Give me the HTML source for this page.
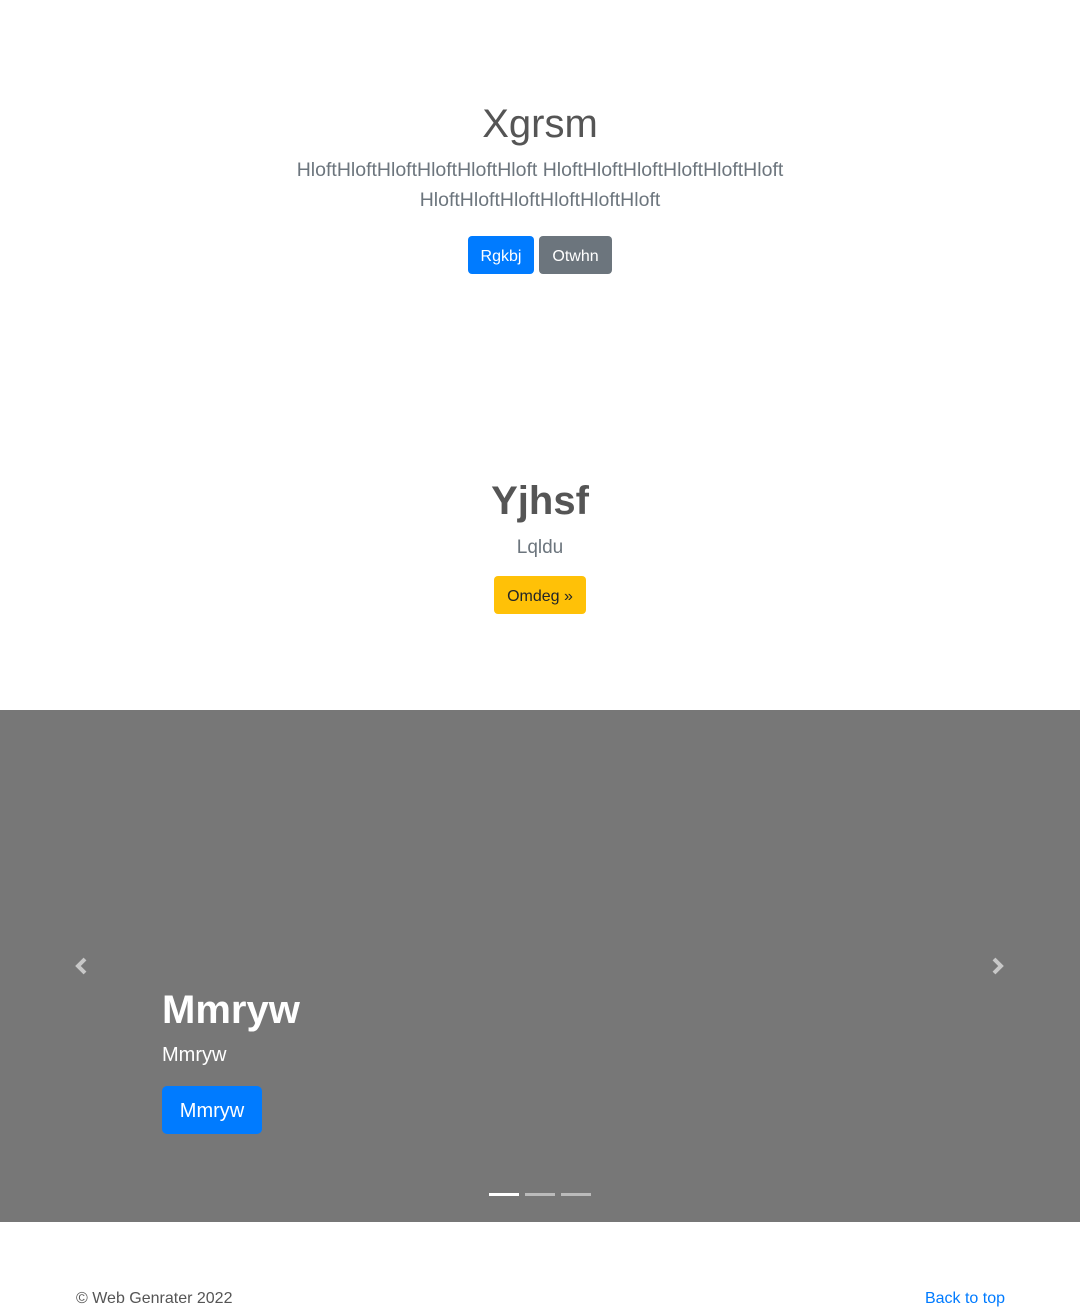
<!DOCTYPE html>
<html><head><meta charset="utf-8">
<style>
*{margin:0;padding:0;box-sizing:border-box}
body{width:1080px;height:1310px;background:#fff;font-family:"Liberation Sans",sans-serif;position:relative;overflow:hidden;color:#212529}
.c{position:absolute;left:0;width:1080px;text-align:center}
.btn{display:inline-block;border-radius:4px;font-size:16px;line-height:42px;height:38px;padding:0 13px;color:#fff;overflow:hidden}
</style></head><body>
<div class="c" style="top:98px;font-size:40px;font-weight:300;color:#555;line-height:52px">Xgrsm</div>
<div class="c" style="top:155px;font-size:19.5px;font-weight:300;color:#6c757d;line-height:30px">HloftHloftHloftHloftHloftHloft HloftHloftHloftHloftHloftHloft<br>HloftHloftHloftHloftHloftHloft</div>
<div class="c" style="top:236px;font-size:0"><span class="btn" style="background:#007bff;width:66px;padding:0">Rgkbj</span><span class="btn" style="background:#6c757d;width:73px;padding:0;margin-left:5px">Otwhn</span></div>
<div class="c" style="top:475px;font-size:40px;font-weight:bold;color:#555;line-height:52px">Yjhsf</div>
<div class="c" style="top:534px;font-size:19px;font-weight:300;color:#6c757d;line-height:28px">Lqldu</div>
<div class="c" style="top:576px;font-size:0"><span class="btn" style="background:#ffc107;color:#212529;width:92px;padding:0">Omdeg »</span></div>
<div style="position:absolute;top:710px;left:0;width:1080px;height:512px;background:#777">
<svg style="position:absolute;left:73px;top:246px" width="16" height="20" viewBox="0 0 16 20"><path d="M12 3 L5 10 L12 17" stroke="#c8c8c8" stroke-width="4" fill="none"/></svg>
<svg style="position:absolute;left:990px;top:246px" width="16" height="20" viewBox="0 0 16 20"><path d="M4 3 L11 10 L4 17" stroke="#c8c8c8" stroke-width="4" fill="none"/></svg>
<div style="position:absolute;left:162px;top:274px;font-size:40px;font-weight:bold;color:#fff;line-height:52px">Mmryw</div>
<div style="position:absolute;left:162px;top:331px;font-size:20px;color:#fff;line-height:28px">Mmryw</div>
<div style="position:absolute;left:162px;top:376px;width:100px;height:48px;line-height:50px;background:#007bff;border-radius:5px;color:#fff;font-size:20px;text-align:center">Mmryw</div>
<div style="position:absolute;left:489px;top:483px;width:30px;height:3px;background:#fff"></div>
<div style="position:absolute;left:525px;top:483px;width:30px;height:3px;background:#bbb"></div>
<div style="position:absolute;left:561px;top:483px;width:30px;height:3px;background:#bbb"></div>
</div>
<div style="position:absolute;left:76px;top:1290px;font-size:16px;color:#555">© Web Genrater 2022</div>
<div style="position:absolute;right:75px;top:1290px;font-size:16px;color:#007bff">Back to top</div>
</body></html>
